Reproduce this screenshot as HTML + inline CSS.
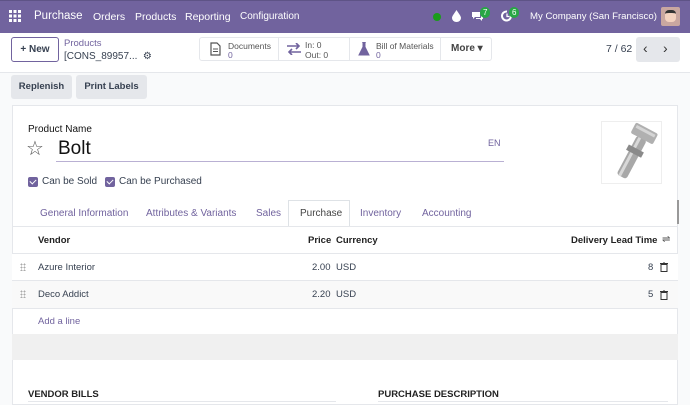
<!DOCTYPE html>
<html><head><meta charset="utf-8">
<style>
*{box-sizing:border-box;margin:0;padding:0}
body{width:690px;height:402px;overflow:hidden;background:#f9fafb;font-family:"Liberation Sans",sans-serif;color:#374151;font-size:10px;position:relative}
.abs{position:absolute}
.nav{left:0;top:0;width:690px;height:33px;background:#71639e;color:#fff;border-top:1px solid #5e5386}
.nav span{position:absolute;top:10px;font-size:10.5px;white-space:nowrap}
.cp{left:0;top:33px;width:690px;height:40px;background:#fff;border-bottom:1px solid #e5e7eb}
.btn{position:absolute;border-radius:3px}
.stat{position:absolute;top:37px;height:24px;border:1px solid #e5e7eb;background:#fff}
.badge{position:absolute;background:#28a745;color:#fff;border-radius:6px;font-size:8px;height:11px;line-height:11px;padding:0 3px}
.sheet{left:12px;top:105px;width:666px;height:300px;background:#fff;border:1px solid #e5e7eb}
.tab{position:absolute;top:208px;color:#71639e;font-size:10px}
.row{position:absolute;left:12px;width:666px;border-bottom:1px solid #e5e7eb}
.cb{position:absolute;width:10px;height:10px;background:#71639e;border-radius:2px}
.cb:after{content:"";position:absolute;left:3px;top:1px;width:3px;height:5px;border:solid #fff;border-width:0 1.3px 1.3px 0;transform:rotate(45deg)}
.drag{position:absolute;left:20px;width:6px;height:8px;background-image:radial-gradient(#aaa 0.8px,transparent 1px);background-size:3px 3px}
</style></head><body>
<div class="abs nav">
 <svg class="abs" style="left:9px;top:9px" width="12" height="12"><g fill="#fff"><rect x="0" y="0" width="3" height="3"/><rect x="4.5" y="0" width="3" height="3"/><rect x="9" y="0" width="3" height="3"/><rect x="0" y="4.5" width="3" height="3"/><rect x="4.5" y="4.5" width="3" height="3"/><rect x="9" y="4.5" width="3" height="3"/><rect x="0" y="9" width="3" height="3"/><rect x="4.5" y="9" width="3" height="3"/><rect x="9" y="9" width="3" height="3"/></g></svg>
 <span style="left:34px;font-size:11.5px;top:9px">Purchase</span>
 <span style="left:93px">Orders</span>
 <span style="left:135px">Products</span>
 <span style="left:185px">Reporting</span>
 <span style="left:240px;font-size:10px">Configuration</span>
 <div class="abs" style="left:433px;top:12px;width:8px;height:8px;border-radius:50%;background:#1a9c1a"></div>
 <svg class="abs" style="left:452px;top:9px" width="9" height="12"><path d="M4.5 0 C2 4 0 6 0 8 A4.5 4 0 0 0 9 8 C9 6 7 4 4.5 0Z" fill="#fff"/></svg>
 <svg class="abs" style="left:471px;top:10px" width="13" height="11"><path d="M1 1h8v5H4l-2 2V6H1z" fill="#fff"/><path d="M10 3h2v5h-1v2l-2-2H5V7h5z" fill="#fff"/></svg>
 <div class="badge" style="left:480px;top:6px">7</div>
 <svg class="abs" style="left:501px;top:9px" width="12" height="12"><path d="M10 6A4.5 4.5 0 1 1 6 1.5" stroke="#fff" stroke-width="2" fill="none"/><path d="M6 3.5v3h2.5" stroke="#fff" stroke-width="1.3" fill="none"/></svg>
 <div class="badge" style="left:509px;top:6px">6</div>
 <span style="left:530px;font-size:9.6px">My Company (San Francisco)</span>
 <div class="abs" style="left:661px;top:6px;width:19px;height:19px;background:#c9a7a0;border-radius:2px"><div class="abs" style="left:4px;top:3px;width:11px;height:12px;background:#f3d2bf;border-radius:4px;border-top:3px solid #333"></div></div>
</div>
<div class="abs cp">
 <div class="btn" style="left:11px;top:4px;width:48px;height:25px;border:1px solid #71639e;color:#374151;font-weight:bold;font-size:10px;line-height:23px;text-align:center">+ New</div>
 <div class="abs" style="left:64px;top:5px;color:#71639e;font-size:9.5px">Products</div>
 <div class="abs" style="left:64px;top:18px;font-size:10px">[CONS_89957...&nbsp; ⚙</div>
</div>
<div class="stat" style="left:199px;width:80px;border-radius:3px 0 0 3px">
 <svg class="abs" style="left:10px;top:4px" width="11" height="14"><path d="M1 1h6l3 3v9H1z" fill="none" stroke="#555" stroke-width="1.2"/><path d="M3 7h5M3 9.5h5" stroke="#555"/></svg>
 <div class="abs" style="left:28px;top:3px;font-size:8.5px;color:#555">Documents</div>
 <div class="abs" style="left:28px;top:12px;font-size:8.5px;color:#71639e">0</div>
</div>
<div class="stat" style="left:278px;width:72px">
 <svg class="abs" style="left:8px;top:5px" width="14" height="12"><path d="M0 3h12M9 0l3 3-3 3M14 9H2M5 6l-3 3 3 3" stroke="#71639e" stroke-width="1.6" fill="none"/></svg>
 <div class="abs" style="left:26px;top:2px;font-size:8.5px;color:#555">In: 0</div>
 <div class="abs" style="left:26px;top:12px;font-size:8.5px;color:#555">Out: 0</div>
</div>
<div class="stat" style="left:349px;width:92px">
 <svg class="abs" style="left:8px;top:4px" width="12" height="14"><path d="M4 0h4M5 0v5L1 13h10L7 5V0" fill="#71639e" stroke="#71639e"/></svg>
 <div class="abs" style="left:26px;top:3px;font-size:8.5px;color:#555">Bill of Materials</div>
 <div class="abs" style="left:26px;top:12px;font-size:8.5px;color:#71639e">0</div>
</div>
<div class="stat" style="left:440px;width:52px;border-radius:0 3px 3px 0;font-size:10px;font-weight:bold;line-height:22px;padding-left:10px;color:#444">More ▾</div>
<div class="abs" style="left:606px;top:43px;font-size:10.5px">7 / 62</div>
<div class="btn" style="left:636px;top:37px;width:44px;height:25px;background:#e5e7eb;font-size:14px;color:#333"><span class="abs" style="left:7px;top:3px">‹</span><span class="abs" style="left:27px;top:3px">›</span></div>
<div class="btn" style="left:11px;top:75px;width:61px;height:24px;background:#e5e7eb;font-weight:bold;font-size:9.5px;line-height:24px;text-align:center;color:#374151">Replenish</div>
<div class="btn" style="left:76px;top:75px;width:71px;height:24px;background:#e5e7eb;font-weight:bold;font-size:9.5px;line-height:24px;text-align:center;color:#374151">Print Labels</div>
<div class="abs sheet"></div>
<div class="abs" style="left:28px;top:124px;font-size:10px;color:#111">Product Name</div>
<div class="abs" style="left:26px;top:136px;font-size:20px;color:#555">☆</div>
<div class="abs" style="left:58px;top:138px;font-size:19px;color:#111">Bolt</div>
<div class="abs" style="left:56px;top:161px;width:448px;height:1px;background:#b9b0d3"></div>
<div class="abs" style="left:488px;top:138px;font-size:9px;color:#71639e">EN</div>
<div class="abs" style="left:601px;top:121px;width:61px;height:63px;border:1px solid #eee;background:#fff">
 <svg width="61" height="63"><g transform="rotate(28 32 32)"><rect x="26" y="14" width="11" height="44" rx="3" fill="#a8a8a8"/><rect x="28" y="14" width="3" height="44" fill="#d8d8d8"/><rect x="19" y="3" width="25" height="12" rx="2" fill="#b0b0b0"/><rect x="21" y="5" width="21" height="3" fill="#d5d5d5"/><rect x="23" y="26" width="17" height="6" fill="#8a8a8a"/></g></svg>
</div>
<div class="cb" style="left:28px;top:177px"></div><div class="abs" style="left:42px;top:176px;font-size:10px">Can be Sold</div>
<div class="cb" style="left:105px;top:177px"></div><div class="abs" style="left:119px;top:176px;font-size:10px">Can be Purchased</div>
<div class="abs" style="left:677px;top:200px;width:2px;height:24px;background:#999"></div>
<div class="tab" style="left:40px">General Information</div>
<div class="tab" style="left:146px">Attributes &amp; Variants</div>
<div class="tab" style="left:256px">Sales</div>
<div class="abs" style="left:288px;top:200px;width:62px;height:27px;border:1px solid #dee2e6;border-bottom:none;background:#fff"></div>
<div class="tab" style="left:300px;color:#444">Purchase</div>
<div class="tab" style="left:360px">Inventory</div>
<div class="tab" style="left:422px">Accounting</div>
<div class="row" style="top:226px;border-top:1px solid #e5e7eb;height:28px"></div>
<div class="abs" style="left:38px;top:235px;font-weight:bold;font-size:9.5px;color:#222">Vendor</div>
<div class="abs" style="left:308px;top:235px;font-weight:bold;font-size:9.5px;color:#222">Price</div>
<div class="abs" style="left:336px;top:235px;font-weight:bold;font-size:9.5px;color:#222">Currency</div>
<div class="abs" style="left:571px;top:235px;font-weight:bold;font-size:9.5px;color:#222">Delivery Lead Time</div>
<div class="abs" style="left:662px;top:234px;font-size:10px;color:#555">⇌</div>
<div class="row" style="top:254px;height:27px;background:#fff"></div>
<div class="row" style="top:281px;height:28px;background:#f9f9f9"></div>
<div class="drag" style="top:263px"></div><div class="drag" style="top:290px"></div>
<div class="abs" style="left:38px;top:262px;font-size:9.5px">Azure Interior</div>
<div class="abs" style="left:312px;top:262px;font-size:9.5px">2.00</div>
<div class="abs" style="left:336px;top:262px;font-size:9.5px">USD</div>
<div class="abs" style="left:648px;top:262px;font-size:9.5px">8</div>
<div class="abs" style="left:38px;top:289px;font-size:9.5px">Deco Addict</div>
<div class="abs" style="left:312px;top:289px;font-size:9.5px">2.20</div>
<div class="abs" style="left:336px;top:289px;font-size:9.5px">USD</div>
<div class="abs" style="left:648px;top:289px;font-size:9.5px">5</div>
<svg class="abs" style="left:660px;top:262px" width="8" height="10"><path d="M0 1.5h8M3 0h2M1 2.5h6v7H1z" fill="none" stroke="#333"/></svg>
<svg class="abs" style="left:660px;top:290px" width="8" height="10"><path d="M0 1.5h8M3 0h2M1 2.5h6v7H1z" fill="none" stroke="#333"/></svg>
<div class="abs" style="left:38px;top:316px;font-size:9.5px;color:#71639e">Add a line</div>
<div class="abs" style="left:12px;top:334px;width:666px;height:26px;background:#f0f0f0"></div>
<div class="abs" style="left:28px;top:389px;font-weight:bold;font-size:9.5px;color:#222">VENDOR BILLS</div>
<div class="abs" style="left:378px;top:389px;font-weight:bold;font-size:9.5px;color:#222">PURCHASE DESCRIPTION</div>
<div class="abs" style="left:28px;top:401px;width:308px;height:1px;background:#e5e7eb"></div>
<div class="abs" style="left:378px;top:401px;width:290px;height:1px;background:#e5e7eb"></div>
</body></html>
